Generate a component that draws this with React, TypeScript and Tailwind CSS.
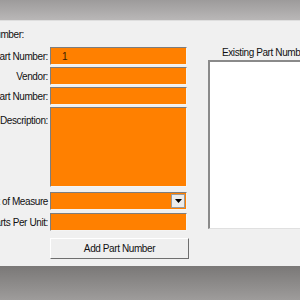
import React from "react";

const Field = ({ className = "", children }: { className?: string; children?: React.ReactNode }) => {
  return (
    <div
      className={
        "w-[137px] bg-[#ff8000] border-t border-l border-[#7d7d7d] border-r-[#f4f4f4] border-b-[#f4f4f4] border-r border-b flex items-center pl-[11px] text-[#3a1a00] " +
        className
      }
    >
      {children}
    </div>
  );
};

const Label = ({ children, top = false }: { children: React.ReactNode; top?: boolean }) => {
  return (
    <div
      className={
        "w-[48px] flex justify-end whitespace-nowrap overflow-visible text-[#111] " +
        (top ? "self-start pt-[6px]" : "")
      }
    >
      {children}
    </div>
  );
};

export default function App() {
  return (
    <div className="w-[300px] h-[300px] flex flex-col overflow-hidden font-['Liberation_Sans',sans-serif] text-[10px] tracking-[-0.4px]">
      <div className="h-[21px] bg-gradient-to-b from-[#9d9b9b] to-[#b9b7b7] border-b border-[#dedede]" />

      <div className="h-[245px] bg-[#f0f0f0] flex">
        <div className="w-[190px] flex flex-col pt-[7px]">
          <div className="w-[24px] h-[12px] flex justify-end items-center whitespace-nowrap text-[#111]">
            New Part Number:
          </div>

          <div className="mt-[7px] flex flex-col">
            <div className="flex items-center gap-[2px]">
              <Label>Part Number:</Label>
              <Field className="h-[18px]">1</Field>
            </div>
            <div className="flex items-center gap-[2px] mt-[2px]">
              <Label>Vendor:</Label>
              <Field className="h-[18px]" />
            </div>
            <div className="flex items-center gap-[2px] mt-[2px]">
              <Label>Vendor Part Number:</Label>
              <Field className="h-[18px]" />
            </div>
            <div className="flex gap-[2px] mt-[2px]">
              <Label top>Description:</Label>
              <Field className="h-[80px]" />
            </div>
            <div className="flex items-center gap-[2px] mt-[5px]">
              <Label>Unit of Measure</Label>
              <div className="w-[137px] h-[18px] bg-[#ff8000] border-t border-l border-[#7d7d7d] border-r border-b border-r-[#f4f4f4] border-b-[#f4f4f4] flex justify-end items-stretch p-[1px]">
                <div className="w-[14px] bg-[#ececec] border border-[#9a9a9a] flex items-center justify-center">
                  <svg width="7" height="4" viewBox="0 0 7 4">
                    <path d="M0 0 H7 L3.5 4 Z" fill="#000" />
                  </svg>
                </div>
              </div>
            </div>
            <div className="flex items-center gap-[2px] mt-[3px]">
              <Label>Parts Per Unit:</Label>
              <Field className="h-[18px]" />
            </div>
            <div className="flex gap-[2px] mt-[7px]">
              <div className="w-[48px]" />
              <button className="w-[139px] h-[21px] bg-[#efefef] border border-t-white border-l-white border-r-[#6e6e6e] border-b-[#6e6e6e] text-[#111] flex items-center justify-center">
                Add Part Number
              </button>
            </div>
          </div>
        </div>

        <div className="flex-1 flex flex-col pl-[19px] pt-[25px]">
          <div className="h-[12px] pl-[14px] flex items-center whitespace-nowrap text-[#111]">
            Existing Part Number
          </div>
          <div className="mt-[2px] h-[169px] bg-white border-t-2 border-l-2 border-t-[#8a8a8a] border-l-[#8a8a8a] border-b border-b-[#e0e0e0]" />
        </div>
      </div>

      <div className="flex-1 bg-gradient-to-b from-[#7a7877] to-[#9e9c9b]" />
    </div>
  );
}
